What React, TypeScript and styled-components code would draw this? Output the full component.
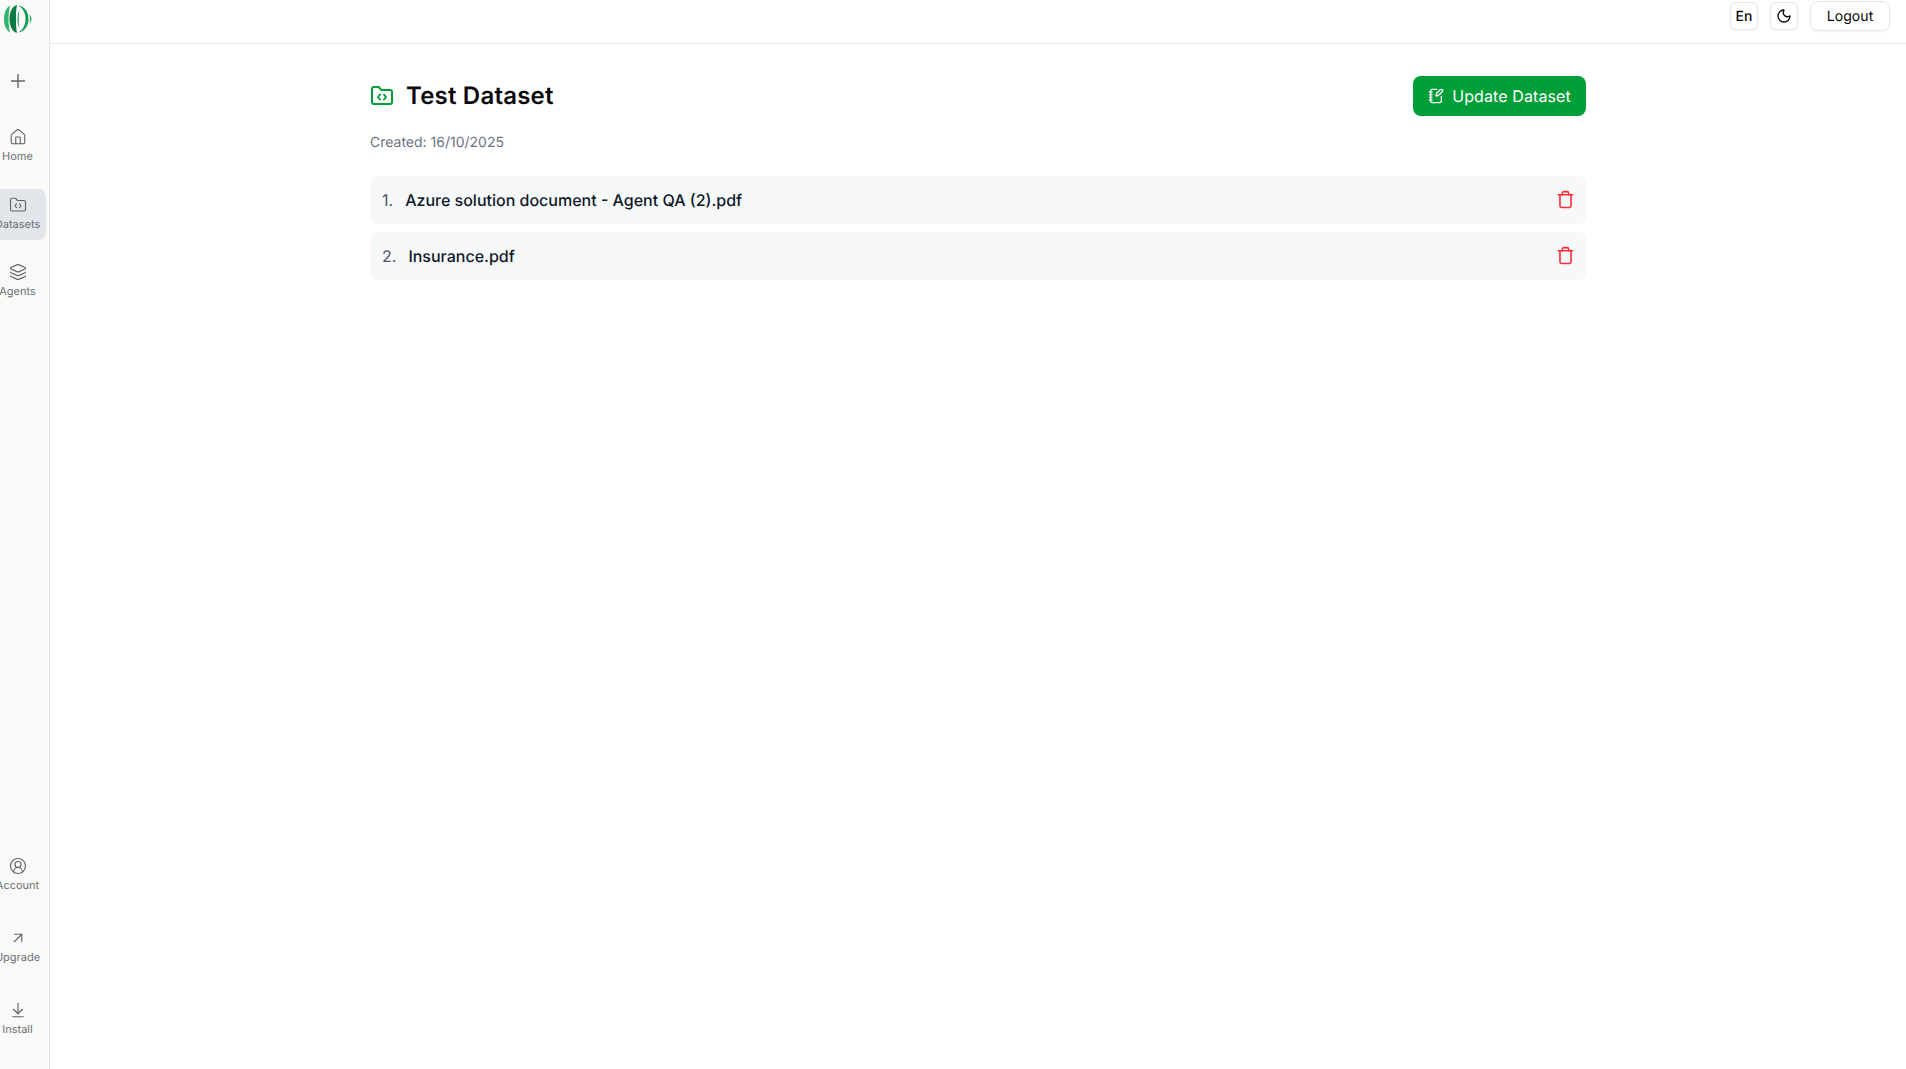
import React from "react";
import styled, { createGlobalStyle } from "styled-components";
import { ArrowDownToLine, ArrowUpRight, CircleUserRound, FolderCode, House, Layers, Moon, NotebookPen, Plus, Trash } from "lucide-react";

const Global = createGlobalStyle`
  html, body { margin: 0; padding: 0; height: 100%; background: #fff; }
  body {
    font-family: Inter, "Liberation Sans", sans-serif;
    color: #0a0a0a;
    text-rendering: geometricPrecision;
    -webkit-font-smoothing: antialiased;
  }
  button { text-rendering: geometricPrecision; }
  #root { height: 100%; }
`;

const Shell = styled.div`
  display: flex;
  height: 1069px;
  overflow: hidden;
`;

const Sidebar = styled.aside`
  flex: 0 0 50px;
  box-sizing: border-box;
  width: 50px;
  height: 100%;
  background: #f9f9f8;
  border-right: 1px solid #e5e5e5;
  display: flex;
  flex-direction: column;
  overflow: hidden;
`;

const LogoWrap = styled.div`
  height: 38px;
  display: flex;
  align-items: center;
  padding-left: 4px;
`;

const AddButton = styled.div`
  height: 24px;
  margin-top: 31px;
  margin-bottom: 28px;
  display: flex;
  align-items: center;
  padding-left: 7px;
  color: #5f6368;
`;

const NavGroup = styled.nav<{ $gap: number }>`
  display: flex;
  flex-direction: column;
  gap: ${(p) => p.$gap}px;
`;

const BottomGroup = styled(NavGroup)`
  margin-top: auto;
  padding-bottom: 24px;
`;

const NavItem = styled.div<{ $active?: boolean }>`
  box-sizing: border-box;
  width: 57px;
  height: 51px;
  margin-left: -11px;
  padding-bottom: 2px;
  flex: none;
  display: flex;
  flex-direction: column;
  align-items: center;
  justify-content: center;
  gap: 3px;
  border-radius: 8px;
  font-size: 11px;
  line-height: 14px;
  color: #6b7075;
  background: ${(p) => (p.$active ? "#e2e5e9" : "transparent")};
  white-space: nowrap;
  svg { color: #5f6368; }
`;

const Main = styled.div`
  flex: 1;
  min-width: 0;
  display: flex;
  flex-direction: column;
`;

const TopBar = styled.header`
  box-sizing: border-box;
  height: 44px;
  flex: none;
  border-bottom: 1px solid #e5e7eb;
  display: flex;
  justify-content: flex-end;
  align-items: flex-start;
  padding: 1px 16px 0 0;
`;

const SquareButton = styled.button`
  box-sizing: border-box;
  width: 28px;
  height: 28px;
  margin: 1px 12px 0 0;
  padding: 0;
  display: flex;
  align-items: center;
  justify-content: center;
  background: #fff;
  border: 1px solid #e5e7eb;
  border-radius: 6px;
  box-shadow: 0 1px 2px rgba(0, 0, 0, 0.05);
  font: 500 14px Inter, sans-serif;
  color: #0a0a0a;
`;

const LogoutButton = styled.button`
  box-sizing: border-box;
  width: 80px;
  height: 30px;
  padding: 0;
  background: #fff;
  border: 1px solid #e5e7eb;
  border-radius: 8px;
  box-shadow: 0 1px 2px rgba(0, 0, 0, 0.05);
  font: 400 14px Inter, sans-serif;
  letter-spacing: 0.1px;
  color: #0a0a0a;
`;

const Content = styled.main`
  box-sizing: border-box;
  width: 1216px;
  margin: 0 auto;
  padding-top: 32px;
`;

const TitleRow = styled.div`
  display: flex;
  justify-content: space-between;
  align-items: center;
  height: 40px;
`;

const Title = styled.h1`
  display: flex;
  align-items: center;
  gap: 12px;
  margin: 0;
  font-size: 24px;
  line-height: 32px;
  font-weight: 600;
  letter-spacing: 0.2px;
  color: #0a0a0a;
  svg { color: #009e38; }
`;

const UpdateButton = styled.button`
  box-sizing: border-box;
  width: 173px;
  height: 40px;
  display: flex;
  align-items: center;
  justify-content: center;
  gap: 8px;
  padding: 0;
  background: #009e38;
  color: #fff;
  border: none;
  border-radius: 8px;
  font: 400 16px Inter, sans-serif;
  letter-spacing: 0.1px;
`;

const Created = styled.p`
  margin: 17px 0 0;
  font-size: 14px;
  line-height: 20px;
  color: #6a7282;
`;

const FileList = styled.ol`
  list-style: none;
  margin: 23px 0 0;
  padding: 0;
  display: flex;
  flex-direction: column;
  gap: 8px;
`;

const FileRow = styled.li`
  box-sizing: border-box;
  height: 48px;
  padding: 0 11px 0 12px;
  display: flex;
  align-items: center;
  background: #f7f8fa;
  border-radius: 8px;
  font-size: 16px;
  font-weight: 500;
  color: #101828;
`;

const Index = styled.span`
  font-weight: 400;
  color: #4a5565;
  margin-right: 12px;
`;

const FileName = styled.span`
  flex: 1;
`;

const TrashIcon = styled(Trash)`
  color: #fb2c36;
  flex: none;
  margin-top: -1px;
`;

function Logo() {
  return (
    <svg width="28" height="28" viewBox="0 0 28 28" fill="none">
      <path d="M6 .5C2 3 0 8 0 14s2 11 6 13.500C5 23 4.500 19 4.500 14S5 5 6 .5Z" fill="#2fb36b" />
      <path d="M13 0C8 1.500 5.500 7 5.500 14S8 26.500 13 28c-1-4-1-9-1-14s0-10 1-14Z" fill="#0c7a43" />
      <path d="M14 .5c6.500 .5 10.500 6.500 10.500 13.500S20.500 27 14 27.500c5-2.500 7.500-7.500 7.500-13.500S19 3 14 .5Z" fill="#159a55" />
      <path d="M15.500 5c-1.500 2.500-2 5.500-2 9s.5 6.500 2 9c-.9-2.500-.7-5.500-.7-9s-.2-6.500.7-9Z" fill="#159a55" />
      <path d="M25.500 9.500c1.500 1.500 2 3 2 4.500s-.5 3-2 4.500c.3-1.500.4-3 .4-4.500s-.1-3-.4-4.500Z" fill="#2fb36b" />
    </svg>
  );
}

const topNav = [
  { label: "Home", Icon: House },
  { label: "Datasets", Icon: FolderCode, active: true },
  { label: "Agents", Icon: Layers },
];
const bottomNav = [
  { label: "Account", Icon: CircleUserRound },
  { label: "Upgrade", Icon: ArrowUpRight },
  { label: "Install", Icon: ArrowDownToLine },
];
const files = ["Azure solution document - Agent QA (2).pdf", "Insurance.pdf"];

export default function App() {
  return (
    <>
      <Global />
      <Shell>
        <Sidebar>
          <LogoWrap><Logo /></LogoWrap>
          <AddButton><Plus size={22} strokeWidth={1.5} /></AddButton>
          <NavGroup $gap={16.5}>
            {topNav.map(({ label, Icon, active }) => (
              <NavItem key={label} $active={active}>
                <Icon size={18} strokeWidth={1.5} />
                {label}
              </NavItem>
            ))}
          </NavGroup>
          <BottomGroup $gap={21}>
            {bottomNav.map(({ label, Icon }) => (
              <NavItem key={label}>
                <Icon size={18} strokeWidth={1.5} />
                {label}
              </NavItem>
            ))}
          </BottomGroup>
        </Sidebar>
        <Main>
          <TopBar>
            <SquareButton>En</SquareButton>
            <SquareButton><Moon size={16} strokeWidth={2} /></SquareButton>
            <LogoutButton>Logout</LogoutButton>
          </TopBar>
          <Content>
            <TitleRow>
              <Title><FolderCode size={24} strokeWidth={2} />Test Dataset</Title>
              <UpdateButton><NotebookPen size={16} strokeWidth={2} />Update Dataset</UpdateButton>
            </TitleRow>
            <Created>Created: 16/10/2025</Created>
            <FileList>
              {files.map((name, i) => (
                <FileRow key={name}>
                  <Index>{i + 1}.</Index>
                  <FileName>{name}</FileName>
                  <TrashIcon size={19} strokeWidth={2} />
                </FileRow>
              ))}
            </FileList>
          </Content>
        </Main>
      </Shell>
    </>
  );
}
